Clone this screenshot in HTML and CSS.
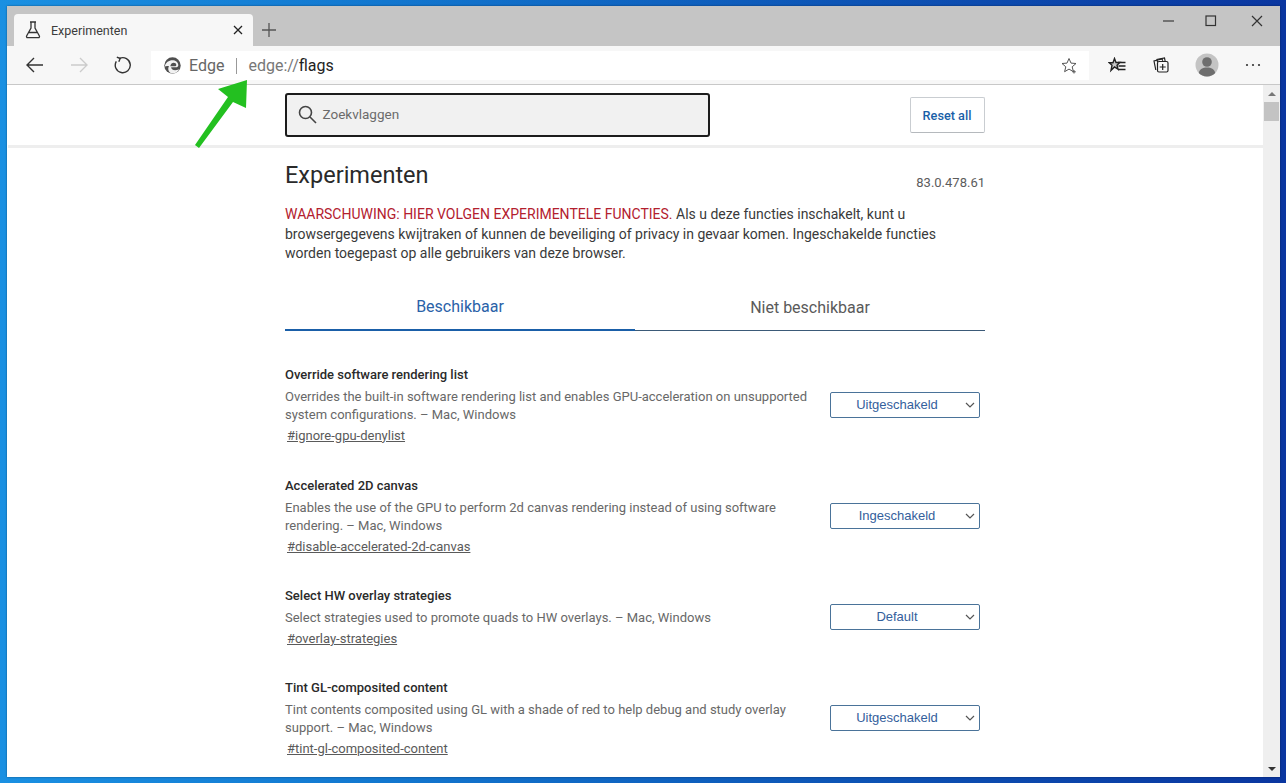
FILE: index.html
```html
<!DOCTYPE html>
<html lang="nl">
<head>
<meta charset="utf-8">
<title>Experimenten</title>
<link rel="stylesheet" href="styles.css">
</head>
<body>
<div class="window">
  <div class="titlebar">
    <div class="tab">
      <svg class="tab-icon" width="16" height="18" viewBox="0 0 16 18" fill="none" stroke="#333" stroke-width="1.3"><path d="M5 1h6M6 1v6L1.6 15a1.2 1.2 0 0 0 1 1.7h10.8a1.2 1.2 0 0 0 1-1.7L10 7V1M4 11.5h8"/></svg>
      <span class="tab-title">Experimenten</span>
      <svg class="tab-close" width="10" height="10" viewBox="0 0 10 10" stroke="#222" stroke-width="1.3"><path d="M1 1l8 8M9 1l-8 8"/></svg>
    </div>
    <svg class="newtab" width="14" height="14" viewBox="0 0 14 14" stroke="#555" stroke-width="1.3"><path d="M7 0v14M0 7h14"/></svg>
    <div class="winctl">
      <svg width="12" height="12" viewBox="0 0 12 12" stroke="#444" stroke-width="1.3"><path d="M0 6h11"/></svg>
      <svg width="12" height="12" viewBox="0 0 12 12" fill="none" stroke="#333" stroke-width="1.2"><rect x="1" y="1" width="9.5" height="9.5"/></svg>
      <svg width="12" height="12" viewBox="0 0 12 12" stroke="#333" stroke-width="1.2"><path d="M1 1l10 10M11 1L1 11"/></svg>
    </div>
  </div>
  <div class="toolbar">
    <svg class="nav nav-back" width="20" height="18" viewBox="0 0 20 18" fill="none" stroke="#333" stroke-width="1.4"><path d="M18 9H2M9 2L2 9l7 7"/></svg>
    <svg class="nav nav-fwd" width="20" height="18" viewBox="0 0 20 18" fill="none" stroke="#ccc" stroke-width="1.4"><path d="M2 9h16M11 2l7 7-7 7"/></svg>
    <svg class="nav nav-reload" width="18" height="18" viewBox="0 0 18 18" fill="none" stroke="#333" stroke-width="1.4"><path d="M5.6 2.400a7.500 7.500 0 1 1-3.300 3"/><path d="M2.800 1.200l3.400 1.300-1.400 3.300"/></svg>
    <div class="omnibox">
      <svg class="edge-logo" width="17" height="17" viewBox="0 0 17 17"><circle cx="8.500" cy="8.500" r="8.200" fill="#4f4f4f"/><path d="M.8 9.500C1.500 5.500 5 3.300 8.300 3.300c3.300 0 5.700 2 6 4.700.1 1.400-1 2.300-2.700 2.300H7.200c-.3 2 2.500 3.800 6.800 2.500l1.400-.6c-1.500 2.800-4.600 4.500-7.500 4.300C4.700 15.800 3.300 12 5 9.300 3.500 8.800 1.800 9 .8 9.500z" fill="#f2f2f2"/><path d="M6.300 9.200c.3-2.300 2-3.400 3.300-3.400 1.600 0 2.600.9 2.700 1.900.1 1-.7 1.500-1.700 1.500z" fill="#4f4f4f"/></svg>
      <span class="omni-edge">Edge</span>
      <span class="omni-sep"></span>
      <span class="omni-url"><span class="omni-scheme">edge://</span>flags</span>
      <svg class="omni-star" width="17" height="17" viewBox="0 0 17 17" fill="none" stroke="#555" stroke-width="1"><path d="M8 1.500l2 4.600 5 .4-3.800 3.300 1.200 4.900L8 12.100l-4.400 2.600 1.200-4.900L1 6.500l5-.4z"/><path d="M13 13v3.500M11.300 14.800h3.500"/></svg>
    </div>
    <div class="tools">
      <svg width="18" height="16" viewBox="0 0 18 16" fill="none" stroke="#222" stroke-width="1.400"><path d="M6.500 1.500l1.500 4h3.800L9 8.200l1 4-3.500-2.200L3 13.500l1-5.200L1.200 5.700H5z" fill="#c8c8c8"/><path d="M10 5.500h7.500M10.500 9h7M10 12.500h7.500"/></svg>
      <svg width="16" height="18" viewBox="0 0 16 18" fill="none" stroke="#222" stroke-width="1.200"><path d="M2.800 14L1 5l8-2 .8 1.800"/><path d="M4.500 6L4 3.500 11.500 2l.6 3"/><rect x="4.500" y="5.500" width="10.500" height="10.500" rx="1.500"/><path d="M9.700 8v6M6.700 11h6"/></svg>
      <svg width="24" height="24" viewBox="0 0 24 24"><circle cx="12" cy="12" r="11.500" fill="#c4c4c4"/><circle cx="12" cy="9" r="4.800" fill="#6e6e6e"/><path d="M3.800 20c.8-4 4-5.500 8.200-5.500s7.400 1.500 8.200 5.500c-2.200 2.300-5 3.500-8.200 3.500s-6-1.200-8.200-3.500z" fill="#6e6e6e"/></svg>
      <svg width="16" height="4" viewBox="0 0 16 4" fill="#333"><circle cx="2" cy="2" r="1.100"/><circle cx="8" cy="2" r="1.100"/><circle cx="14" cy="2" r="1.100"/></svg>
    </div>
  </div>
  <div class="viewport">
    <div class="page">
      <header class="flags-header">
        <div class="flags-header-inner">
          <div class="search">
            <svg width="19" height="19" viewBox="0 0 19 19" fill="none" stroke="#444" stroke-width="1.600"><circle cx="7.500" cy="7.500" r="6"/><path d="M12 12l6 6"/></svg>
            <span class="search-text">Zoekvlaggen</span>
          </div>
          <button class="reset">Reset all</button>
        </div>
      </header>
      <main class="content">
        <div class="title-row">
          <h1>Experimenten</h1>
          <span class="version">83.0.478.61</span>
        </div>
        <p class="warning"><span class="warn-red">WAARSCHUWING: HIER VOLGEN EXPERIMENTELE FUNCTIES.</span> Als u deze functies inschakelt, kunt u browsergegevens kwijtraken of kunnen de beveiliging of privacy in gevaar komen. Ingeschakelde functies worden toegepast op alle gebruikers van deze browser.</p>
        <div class="tabs">
          <div class="tabitem active">Beschikbaar</div>
          <div class="tabitem">Niet beschikbaar</div>
        </div>
        <section class="flag f1">
          <div class="flag-text">
            <h2>Override software rendering list</h2>
            <p>Overrides the built-in software rendering list and enables GPU-acceleration on unsupported system configurations. – Mac, Windows</p>
            <a>#ignore-gpu-denylist</a>
          </div>
          <div class="select"><span>Uitgeschakeld</span><svg width="10" height="6" viewBox="0 0 10 6" fill="none" stroke="#555" stroke-width="1.200"><path d="M1 1l4 4 4-4"/></svg></div>
        </section>
        <section class="flag f2">
          <div class="flag-text">
            <h2>Accelerated 2D canvas</h2>
            <p>Enables the use of the GPU to perform 2d canvas rendering instead of using software rendering. – Mac, Windows</p>
            <a>#disable-accelerated-2d-canvas</a>
          </div>
          <div class="select"><span>Ingeschakeld</span><svg width="10" height="6" viewBox="0 0 10 6" fill="none" stroke="#555" stroke-width="1.200"><path d="M1 1l4 4 4-4"/></svg></div>
        </section>
        <section class="flag f3">
          <div class="flag-text">
            <h2>Select HW overlay strategies</h2>
            <p>Select strategies used to promote quads to HW overlays. – Mac, Windows</p>
            <a>#overlay-strategies</a>
          </div>
          <div class="select"><span>Default</span><svg width="10" height="6" viewBox="0 0 10 6" fill="none" stroke="#555" stroke-width="1.200"><path d="M1 1l4 4 4-4"/></svg></div>
        </section>
        <section class="flag f4">
          <div class="flag-text">
            <h2>Tint GL-composited content</h2>
            <p>Tint contents composited using GL with a shade of red to help debug and study overlay support. – Mac, Windows</p>
            <a>#tint-gl-composited-content</a>
          </div>
          <div class="select"><span>Uitgeschakeld</span><svg width="10" height="6" viewBox="0 0 10 6" fill="none" stroke="#555" stroke-width="1.200"><path d="M1 1l4 4 4-4"/></svg></div>
        </section>
      </main>
    </div>
    <div class="scrollbar">
      <div class="sb-btn"><span class="tri-up"></span></div>
      <div class="sb-thumb"></div>
      <div class="sb-track"></div>
      <div class="sb-btn"><span class="tri-down"></span></div>
    </div>
  </div>
</div>
<svg class="arrow" width="60" height="72" viewBox="0 0 60 72"><path d="M53 2L24 11l10 8L1 67l4 3 34-46 13 6z" fill="#23c020"/></svg>
</body>
</html>
```
FILE: styles.css
```css
* { box-sizing: border-box; }
html, body { margin: 0; height: 100%; overflow: hidden; }
body {
  width: 1286px;
  height: 783px;
  padding: 6px 6px 6px 7px;
  background: linear-gradient(90deg, #1a90e2 0%, #1277cf 30%, #0d55b6 65%, #0a36a0 100%);
  font-family: Roboto, "Liberation Sans", sans-serif;
  position: relative;
}
.window {
  width: 1273px;
  height: 771px;
  display: flex;
  flex-direction: column;
  background: #fff;
  overflow: hidden;
  box-shadow: 0 0 2px rgba(0,0,0,.4);
}
.titlebar {
  height: 40px;
  flex: none;
  background: #c5c5c5;
  display: flex;
  align-items: flex-end;
  padding-left: 7px;
}
.tab {
  width: 239px;
  height: 32px;
  background: #f7f7f7;
  border-radius: 4px 4px 0 0;
  display: flex;
  align-items: center;
  padding: 0 10px 0 11px;
}
.tab-title { font-size: 12.5px; color: #3c3c3c; margin-left: 10px; flex: 1; }
.newtab { margin: 0 0 9px 9px; }
.winctl {
  margin-left: auto;
  align-self: flex-start;
  display: flex;
  padding: 9px 17px 0 0;
}
.winctl svg:nth-child(1) { margin-right: 30px; }
.winctl svg:nth-child(2) { margin-right: 34px; }
.toolbar {
  height: 39px;
  flex: none;
  background: #f7f7f7;
  border-bottom: 1px solid #c8c8c8;
  display: flex;
  align-items: center;
  position: relative;
}
.nav { flex: none; }
.nav-back { margin-left: 18px; }
.nav-fwd { margin-left: 24px; }
.nav-reload { margin-left: 25px; }
.omnibox {
  margin-left: 19px;
  width: 938px;
  height: 29px;
  background: #fff;
  display: flex;
  align-items: center;
  padding: 0 11px 0 13px;
  align-self: flex-start;
  margin-top: 5px;
}
.omni-edge { font-size: 16px; color: #666; margin-left: 8px; }
.omni-sep { width: 1px; height: 16px; background: #999; margin: 0 11px 0 12px; }
.omni-url { font-size: 16px; color: #222; flex: 1; }
.omni-scheme { color: #777; }
.tools {
  flex: none;
  display: flex;
  align-items: center;
  margin-left: 19px;
}
.tools svg:nth-child(1) { margin-right: 27px; }
.tools svg:nth-child(2) { margin-right: 26px; }
.tools svg:nth-child(3) { margin-right: 26px; }
.viewport { flex: 1; display: flex; min-height: 0; }
.page { flex: 1; min-width: 0; overflow: hidden; }
.flags-header {
  height: 63px;
  border-bottom: 3px solid #eeeeee;
  margin-left: 1px;
}
.flags-header-inner {
  width: 700px;
  margin: 0 auto;
  position: relative;
  left: -1px;
  display: flex;
  justify-content: space-between;
  align-items: flex-start;
  padding-top: 8px;
}
.search {
  width: 425px;
  height: 44px;
  background: #f1f1f1;
  border: 2px solid #1c1c1c;
  border-radius: 3px;
  display: flex;
  align-items: center;
  padding: 0 0 1px 11px;
}
.search-text { font-size: 13.500px; color: #6b6b6b; margin: 0 0 1px 6px; }
.reset {
  width: 75px;
  height: 36px;
  margin-top: 4px;
  background: #fff;
  border: 1px solid #c9cdd1;
  border-bottom-color: #b5b9bd;
  border-radius: 2px;
  color: #1a5fa8;
  font: 500 12.700px Roboto, sans-serif;
  padding: 0;
}
.content { width: 700px; margin: 0 auto; color: #333; }
.title-row {
  display: flex;
  justify-content: space-between;
  align-items: flex-end;
  padding-top: 13px;
}
h1 { margin: 0; font-size: 23.500px; font-weight: 400; line-height: 29px; color: #2a2a2a; }
.version { font-size: 13px; color: #5c5c5c; line-height: 16px; margin-bottom: -1px; }
.warning { margin: 15px 0 0; font-size: 14px; line-height: 19.600px; color: #3a3a3a; }
.warn-red { color: #b3202e; }
.tabs { display: flex; margin-top: 21px; height: 46px; border-bottom: 1px solid #3b5a78; }
.tabitem {
  flex: 1;
  text-align: center;
  font-size: 16px;
  line-height: 20px;
  padding-top: 13px;
  color: #5a5a5a;
}
.tabitem.active { color: #2a62a8; height: 46px; border-bottom: 2px solid #1a5fa8; padding-top: 12px; }
.flag { display: flex; justify-content: space-between; align-items: center; }
.flag-text { width: 530px; }
.flag h2 { margin: 0; font-size: 13px; font-weight: 500; line-height: 16px; color: #2a2a2a; }
.flag p { margin: 5px 0 0; font-size: 13px; line-height: 18px; color: #686868; }
.flag a { display: block; margin: 3px 0 0 2px; font-size: 13px; line-height: 18px; color: #5a5a5a; text-decoration: underline; }
.f1 { margin-top: 36px; }
.f2 { margin-top: 33px; }
.f3 { margin-top: 32px; }
.f4 { margin-top: 32px; }
.select {
  width: 150px;
  height: 26px;
  margin: 0 5px 2px 0;
  border: 1px solid #4a7399;
  border-radius: 2px;
  display: flex;
  align-items: center;
  color: #34609c;
  font-size: 13px;
  font-family: "Liberation Sans", Arial, sans-serif;
  padding-right: 4px;
}
.select span { flex: 1; text-align: center; padding-left: 4px; padding-right: 6px; }
.scrollbar {
  width: 17px;
  flex: none;
  display: flex;
  flex-direction: column;
  background: #efefef;
}
.sb-btn { height: 17px; flex: none; display: flex; align-items: center; justify-content: center; }
.sb-thumb { height: 19px; flex: none; background: #c3c3c3; margin: 0 1px; }
.sb-track { flex: 1; }
.tri-up { width: 0; height: 0; border: 4px solid transparent; border-top: 0; border-bottom: 4px solid #777; }
.tri-down { width: 0; height: 0; border: 4px solid transparent; border-bottom: 0; border-top: 4px solid #333; }
.arrow { position: absolute; left: 194px; top: 78px; }
```
